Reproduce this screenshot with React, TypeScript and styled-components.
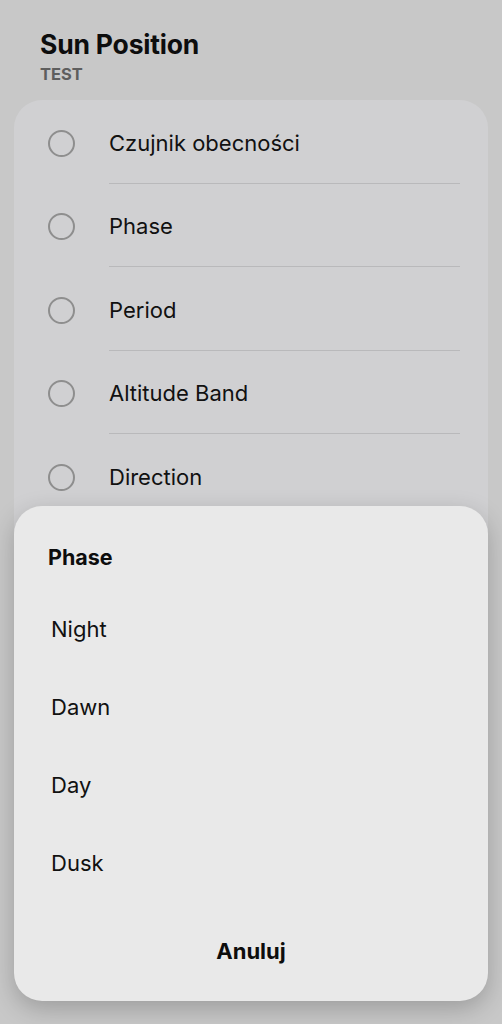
import { FC } from "react";
import styled, { createGlobalStyle } from "styled-components";

const GlobalStyle = createGlobalStyle`
  html, body {
    margin: 0;
    padding: 0;
    background: #c8c8c8;
    font-family: Inter, "Noto Sans", "Liberation Sans", sans-serif;
    -webkit-font-smoothing: antialiased;
  }
  * {
    box-sizing: border-box;
  }
`;

const Page = styled.div`
  position: relative;
  width: 502px;
  height: 1024px;
  overflow: hidden;
  background: #c8c8c8;
  padding: 27px 14px 0;
`;

const Header = styled.header`
  padding: 0 26px;
  margin-bottom: 13px;
`;

const Title = styled.h1`
  margin: 0;
  font-size: 26.5px;
  font-weight: 700;
  line-height: 34px;
  color: #0d0d0d;
  letter-spacing: -0.2px;
`;

const Subtitle = styled.div`
  font-size: 16.5px;
  font-weight: 700;
  line-height: 26px;
  color: #5e5e5e;
`;

const Card = styled.ul`
  list-style: none;
  margin: 0;
  padding: 0 28px 40px 0;
  background: #d0d0d2;
  border-radius: 28px;
`;

const Row = styled.li`
  display: flex;
  align-items: center;
  height: 83.5px;
  padding-top: 3px;
`;

const RadioCell = styled.div`
  width: 95px;
  display: flex;
  justify-content: center;
`;

const Radio = styled.span`
  display: block;
  width: 27px;
  height: 27px;
  border-radius: 50%;
  border: 2px solid #8e8e8e;
`;

const RowLabel = styled.div<{ $divider: boolean }>`
  flex: 1;
  height: 100%;
  display: flex;
  align-items: center;
  font-size: 22px;
  color: #111111;
  border-bottom: 1px solid ${(p) => (p.$divider ? "#b9b9bb" : "transparent")};
`;

const Sheet = styled.div`
  position: absolute;
  left: 14px;
  right: 14px;
  top: 506px;
  height: 495px;
  background: #e9e9e9;
  border-radius: 28px;
  box-shadow: 0 8px 24px rgba(0, 0, 0, 0.22);
  display: flex;
  flex-direction: column;
  padding: 36px 0 0;
`;

const SheetTitle = styled.div`
  padding: 0 34px;
  font-size: 21.5px;
  font-weight: 700;
  line-height: 30px;
  color: #0d0d0d;
  margin-bottom: 18px;
`;

const Option = styled.div`
  height: 78px;
  padding: 0 37px;
  display: flex;
  align-items: center;
  font-size: 22px;
  color: #111111;
`;

const CancelButton = styled.button`
  margin: 24px auto 0;
  background: none;
  border: none;
  font-family: inherit;
  font-size: 22px;
  font-weight: 700;
  color: #0d0d0d;
  padding: 12px 30px;
`;

const rows = ["Czujnik obecności", "Phase", "Period", "Altitude Band", "Direction"];
const phases = ["Night", "Dawn", "Day", "Dusk"];

const App: FC = () => {
  return (
    <>
      <GlobalStyle />
      <Page>
        <Header>
          <Title>Sun Position</Title>
          <Subtitle>TEST</Subtitle>
        </Header>
        <Card>
          {rows.map((label, i) => (
            <Row key={label}>
              <RadioCell>
                <Radio />
              </RadioCell>
              <RowLabel $divider={i < rows.length - 1}>{label}</RowLabel>
            </Row>
          ))}
        </Card>
        <Sheet>
          <SheetTitle>Phase</SheetTitle>
          {phases.map((p) => (
            <Option key={p}>{p}</Option>
          ))}
          <CancelButton>Anuluj</CancelButton>
        </Sheet>
      </Page>
    </>
  );
};

export default App;
